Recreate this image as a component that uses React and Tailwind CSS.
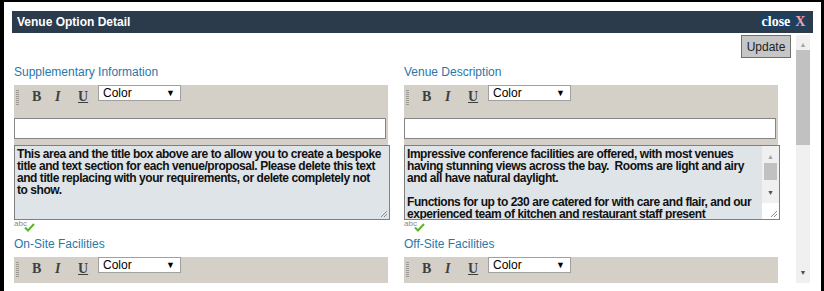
import React from "react";

const ARIAL = "font-['Liberation_Sans',Arial,sans-serif]";
const SERIF = "font-['Liberation_Serif','Times_New_Roman',serif]";

function Grip() {
  return (
    <div className="ml-[2px] mt-[5px] h-[15px] w-[3px] bg-[repeating-linear-gradient(to_bottom,#9c9a94_0_1px,transparent_1px_2px)]" />
  );
}

function Toolbar({ tall }) {
  return (
    <div className={`bg-[#d4d0c8] w-[374px] ${tall ? "h-[60px]" : "h-[26px]"}`}>
      <div className="flex items-start h-[33px]">
        <Grip />
        <span className={`${SERIF} ml-[13px] mt-[3px] w-[10px] text-[14px] leading-[18px] font-bold text-[#3f3f3f]`}>B</span>
        <span className={`${SERIF} ml-[13px] mt-[3px] w-[8px] text-[14px] leading-[18px] font-bold italic text-[#3f3f3f]`}>I</span>
        <span className={`${SERIF} ml-[15px] mt-[3px] w-[10px] text-[14px] leading-[18px] font-bold underline text-[#3f3f3f]`}>U</span>
        <div className="ml-[10px] flex h-[16px] w-[83px] items-center justify-between border border-[#a0a0a0] bg-white pl-[4px] pr-[5px]">
          <span className={`${ARIAL} text-[12px] leading-[14px] text-black`}>Color</span>
          <span className="text-[9px] leading-[10px] text-black">▼</span>
        </div>
      </div>
      {tall && <div className="h-[21px] w-[372px] border border-[#868686] bg-white" />}
    </div>
  );
}

function ResizeGrip() {
  return (
    <svg width="9" height="9" viewBox="0 0 9 9" className="absolute bottom-[1px] right-[1px]">
      <path d="M8 2 L2 8 M8 5 L5 8" stroke="#8a8a8a" strokeWidth="1" />
    </svg>
  );
}

function SpellCheck() {
  return (
    <div className="relative h-[12px] w-[24px]">
      <span className={`${ARIAL} absolute left-0 top-0 text-[8px] leading-[8px] text-[#8a8a8a]`}>abc</span>
      <svg width="11" height="9" viewBox="0 0 11 9" className="absolute left-[10px] top-[3px]">
        <path d="M1 4.5 L4 7.5 L10 1" stroke="#5bb52a" strokeWidth="2" fill="none" />
      </svg>
    </div>
  );
}

function Label({ children, top }) {
  return (
    <div className={`${ARIAL} ${top} h-[14px] text-[12px] leading-[14px] text-[#2a77aa]`}>{children}</div>
  );
}

function Editor({ label, lines, scroll }) {
  return (
    <div className="w-[376px]">
      <Label top="mt-[7px]">{label}</Label>
      <div className="mt-[6px]">
        <Toolbar tall />
      </div>
      <div className="relative flex h-[75px] w-[376px] overflow-hidden border border-[#7f7f7f] bg-[#dfe4e8]">
        <div className={`${ARIAL} flex-1 overflow-hidden pl-[2px] pt-[2px] text-[12px] font-bold leading-[12px] tracking-[-0.45px] text-[#111]`}>
          {lines.map((l, i) => (
            <div key={i} className="h-[12px] whitespace-pre">
              {l}
            </div>
          ))}
        </div>
        {scroll ? (
          <div className="flex w-[17px] flex-col bg-[#f0f0f0]">
            <div className="flex h-[16px] items-end justify-center pb-[1px] text-[7px] leading-[8px] text-[#a3a3a3]">▲</div>
            <div className="mx-auto mt-[1px] h-[17px] w-[13px] bg-[#c1c1c1]" />
            <div className="mt-[9px] flex h-[8px] items-center justify-center text-[7px] leading-[8px] text-[#505050]">▼</div>
            <div className="mt-[2px] flex-1 bg-[#f0f0f0]" />
            <div className="h-[16px] bg-white" />
          </div>
        ) : null}
        <ResizeGrip />
      </div>
      <SpellCheck />
    </div>
  );
}

function ShortEditor({ label }) {
  return (
    <div className="w-[376px]">
      <Label top="mt-[5px]">{label}</Label>
      <div className="mt-[6px]">
        <Toolbar />
      </div>
    </div>
  );
}

export default function App() {
  return (
    <div className="h-[291px] w-[824px] overflow-hidden bg-black pl-[4px] pr-[3px] pt-[2px]">
      <div className="flex h-[289px] flex-col bg-white px-[8px] pt-[9px]">
        <div className="flex h-[22px] items-center justify-between bg-[#2b3b4c] pl-[5px] pr-[5px]">
          <span className={`${ARIAL} text-[12px] font-bold leading-[14px] text-white`}>Venue Option Detail</span>
          <div className={`${SERIF} flex h-[16px] w-[49px] items-center justify-center gap-[5px] bg-[#1f3f5f] text-[14px] font-bold leading-[16px]`}>
            <span className="text-white">close</span>
            <span className="text-[#f0a0a8]">X</span>
          </div>
        </div>
        <div className="flex flex-1 overflow-hidden">
          <div className="w-[784px]">
            <div className="mt-[2px] flex h-[23px] justify-end pr-[5px]">
              <button className={`${ARIAL} h-[23px] w-[50px] border border-[#6f6f6f] bg-[#c6c6c6] text-[12px] leading-[14px] text-[#222]`}>
                Update
              </button>
            </div>
            <div className="flex gap-[14px] pl-[2px]">
              <div>
                <Editor
                  label="Supplementary Information"
                  lines={[
                    "This area and the title box above are to allow you to create a bespoke",
                    "title and text section for each venue/proposal. Please delete this text",
                    "and title replacing with your requirements, or delete completely not",
                    "to show.",
                  ]}
                />
                <ShortEditor label="On-Site Facilities" />
              </div>
              <div>
                <Editor
                  scroll
                  label="Venue Description"
                  lines={[
                    "Impressive conference facilities are offered, with most venues",
                    "having stunning views across the bay.  Rooms are light and airy",
                    "and all have natural daylight.",
                    "",
                    "Functions for up to 230 are catered for with care and flair, and our",
                    "experienced team of kitchen and restaurant staff present",
                  ]}
                />
                <ShortEditor label="Off-Site Facilities" />
              </div>
            </div>
          </div>
          <div className="mt-[2px] flex h-[248px] w-[14px] flex-col bg-[#f0f0f0]">
            <div className="flex h-[14px] items-end justify-center text-[7px] leading-[8px] text-[#a3a3a3]">▲</div>
            <div className="mt-[1px] h-[95px] w-[14px] bg-[#c1c1c1]" />
            <div className="flex-1" />
            <div className="mb-[6px] flex h-[8px] items-center justify-center text-[7px] leading-[8px] text-[#505050]">▼</div>
          </div>
          <div className="w-[3px]" />
        </div>
      </div>
    </div>
  );
}
